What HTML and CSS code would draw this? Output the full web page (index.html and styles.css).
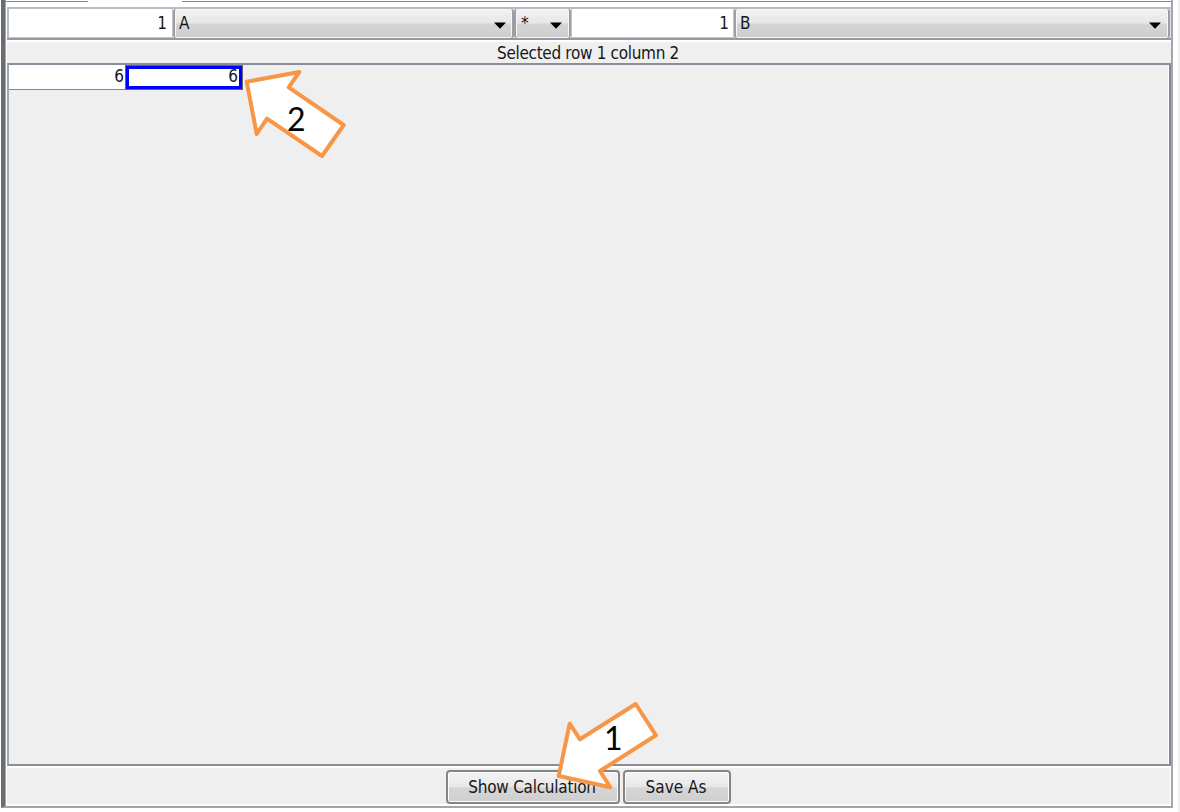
FILE: index.html
```html
<!DOCTYPE html>
<html lang="en">
<head>
<meta charset="utf-8">
<title>Matrix calculator</title>
<link rel="stylesheet" href="styles.css">
</head>
<body>
<main class="window">
  <div class="top-edge"></div>
  <div class="toolbar">
    <div class="field field-a">1</div>
    <div class="combo combo-a"><span>A</span><svg class="chevron" viewBox="0 0 12 7"><path d="M0 .5H12L6 6.7Z"/></svg></div>
    <div class="combo combo-op"><span>*</span><svg class="chevron" viewBox="0 0 12 7"><path d="M0 .5H12L6 6.7Z"/></svg></div>
    <div class="field field-b">1</div>
    <div class="combo combo-b"><span>B</span><svg class="chevron" viewBox="0 0 12 7"><path d="M0 .5H12L6 6.7Z"/></svg></div>
  </div>
  <div class="status"><span>Selected row 1 column 2</span></div>
  <div class="table-pane">
    <div class="cells"><div class="cell">6</div><div class="cell selected">6</div></div>
  </div>
  <footer class="actions">
    <button class="button show"><span>Show Calculation</span></button>
    <button class="button save"><span>Save As</span></button>
  </footer>
</main>
<div class="outer-edge"></div>
<svg class="callouts" viewBox="0 0 1180 812">
  <path d="M246.7 81.7L299.3 72L288.7 87.3L343.7 125L322 156L267 118.7L256.7 134Z"/>
  <path d="M558.7 776L569.7 723.7L580 739.3L635.7 704L656 735.3L600 771L610.3 787.3Z"/>
  <text x="287" y="131">2</text>
  <text x="604" y="750">1</text>
</svg>
</body>
</html>
```
FILE: styles.css
```css
* { box-sizing: border-box; }
body {
  margin: 0;
  width: 1180px;
  height: 812px;
  position: relative;
  overflow: hidden;
  background: #fff;
  color: #17171c;
  font: 17px/20px "DejaVu Sans Condensed", "DejaVu Sans", sans-serif;
  font-stretch: condensed;
}
.window {
  width: 1172px;
  height: 808px;
  margin-left: 1px;
  padding: 5px 0 2px 2px;
  border-left: 4px solid #686e71;
  border-right: 2px solid #a2a5b0;
  border-bottom: 2px solid #a2a5b0;
  box-shadow: inset 1px 0 #a5a8b0;
  display: flex;
  flex-direction: column;
  position: relative;
}
.top-edge {
  position: absolute;
  left: 0;
  right: 0;
  top: 1px;
  height: 1px;
  background: linear-gradient(90deg, #85888e 83px, #fff 83px 177px, #85888e 177px);
}
.toolbar {
  height: 33px;
  margin-top: 2px;
  border-top: 2px solid #b9bcc6;
  border-bottom: 2px solid #96979f;
  display: flex;
  background: #e2e2e5;
}
.field {
  border: 1px solid #c3c5cd;
  border-top: 0;
  background: #fff;
  text-align: right;
  padding: 4px 5px 0 0;
}
.field-a { width: 166px; border-left: 2px solid #b9bcc6; }
.field-b { width: 163px; padding-right: 4px; }
.combo {
  border: 2px solid #9d9ea4;
  border-top-width: 0;
  border-bottom-width: 0;
  border-radius: 3px;
  box-shadow: inset 0 0 0 1px #f7f7f7;
  background: linear-gradient(#f3f3f3, #e6e6e6 48%, #d4d4d4 53%, #cecece);
  display: flex;
  justify-content: space-between;
  padding: 4px 7px 0 4px;
}
.combo-a { width: 341px; padding-right: 6px; }
.combo-op { width: 57px; padding-left: 5px; }
.combo-b { flex: 1; margin-right: 1px; }
.chevron { width: 12px; height: 7px; margin-top: 9px; fill: #000; }
.status {
  height: 23px;
  border-top: 2px solid #fff;
  background: #efefef;
  text-align: center;
  line-height: 23px;
}
.status span { letter-spacing: -.32px; margin-right: 2px; }
.table-pane {
  height: 703px;
  background: #efefef;
  border: 2px solid #8b8e98;
  border-left-color: #a2a5ae;
  border-right-color: #858995;
  box-shadow: inset -1px 0 #fff;
}
.cells { display: flex; }
.cell {
  width: 116px;
  height: 25px;
  background: #fff;
  border-bottom: 1px solid #888;
  text-align: right;
  line-height: 23px;
  padding-right: 1px;
}
.selected {
  width: 118px;
  border: 1px solid #656568;
  box-shadow: inset 0 0 0 3px #00f;
  line-height: 21px;
  padding-right: 4px;
}
.actions {
  height: 38px;
  padding-top: 2px;
  border-top: 2px solid #fff;
  background: #efefef;
  display: flex;
  justify-content: center;
  gap: 3px;
  margin-right: 1px;
}
.button {
  height: 34px;
  flex: none;
  padding: 0 0 1px;
  border: 2px solid #858585;
  border-radius: 4px;
  box-shadow: inset 0 0 0 1px #fcfcfc;
  background: linear-gradient(#f4f4f4, #e8e8e8 48%, #d6d6d6 53%, #cecece);
  color: inherit;
  font: inherit;
}
.show { width: 174px; letter-spacing: -.25px; padding-right: 2px; }
.save { width: 108px; padding-right: 2px; }
.outer-edge {
  position: absolute;
  left: 1178px;
  top: 0;
  width: 2px;
  height: 812px;
  background: #f0f0f0;
}
.callouts {
  position: absolute;
  inset: 0;
  width: 1180px;
  height: 812px;
  pointer-events: none;
}
.callouts path {
  fill: #fff;
  stroke: #f79646;
  stroke-width: 4px;
  stroke-linejoin: round;
}
.callouts text { font: 32px Lato, sans-serif; fill: #000; }
```
